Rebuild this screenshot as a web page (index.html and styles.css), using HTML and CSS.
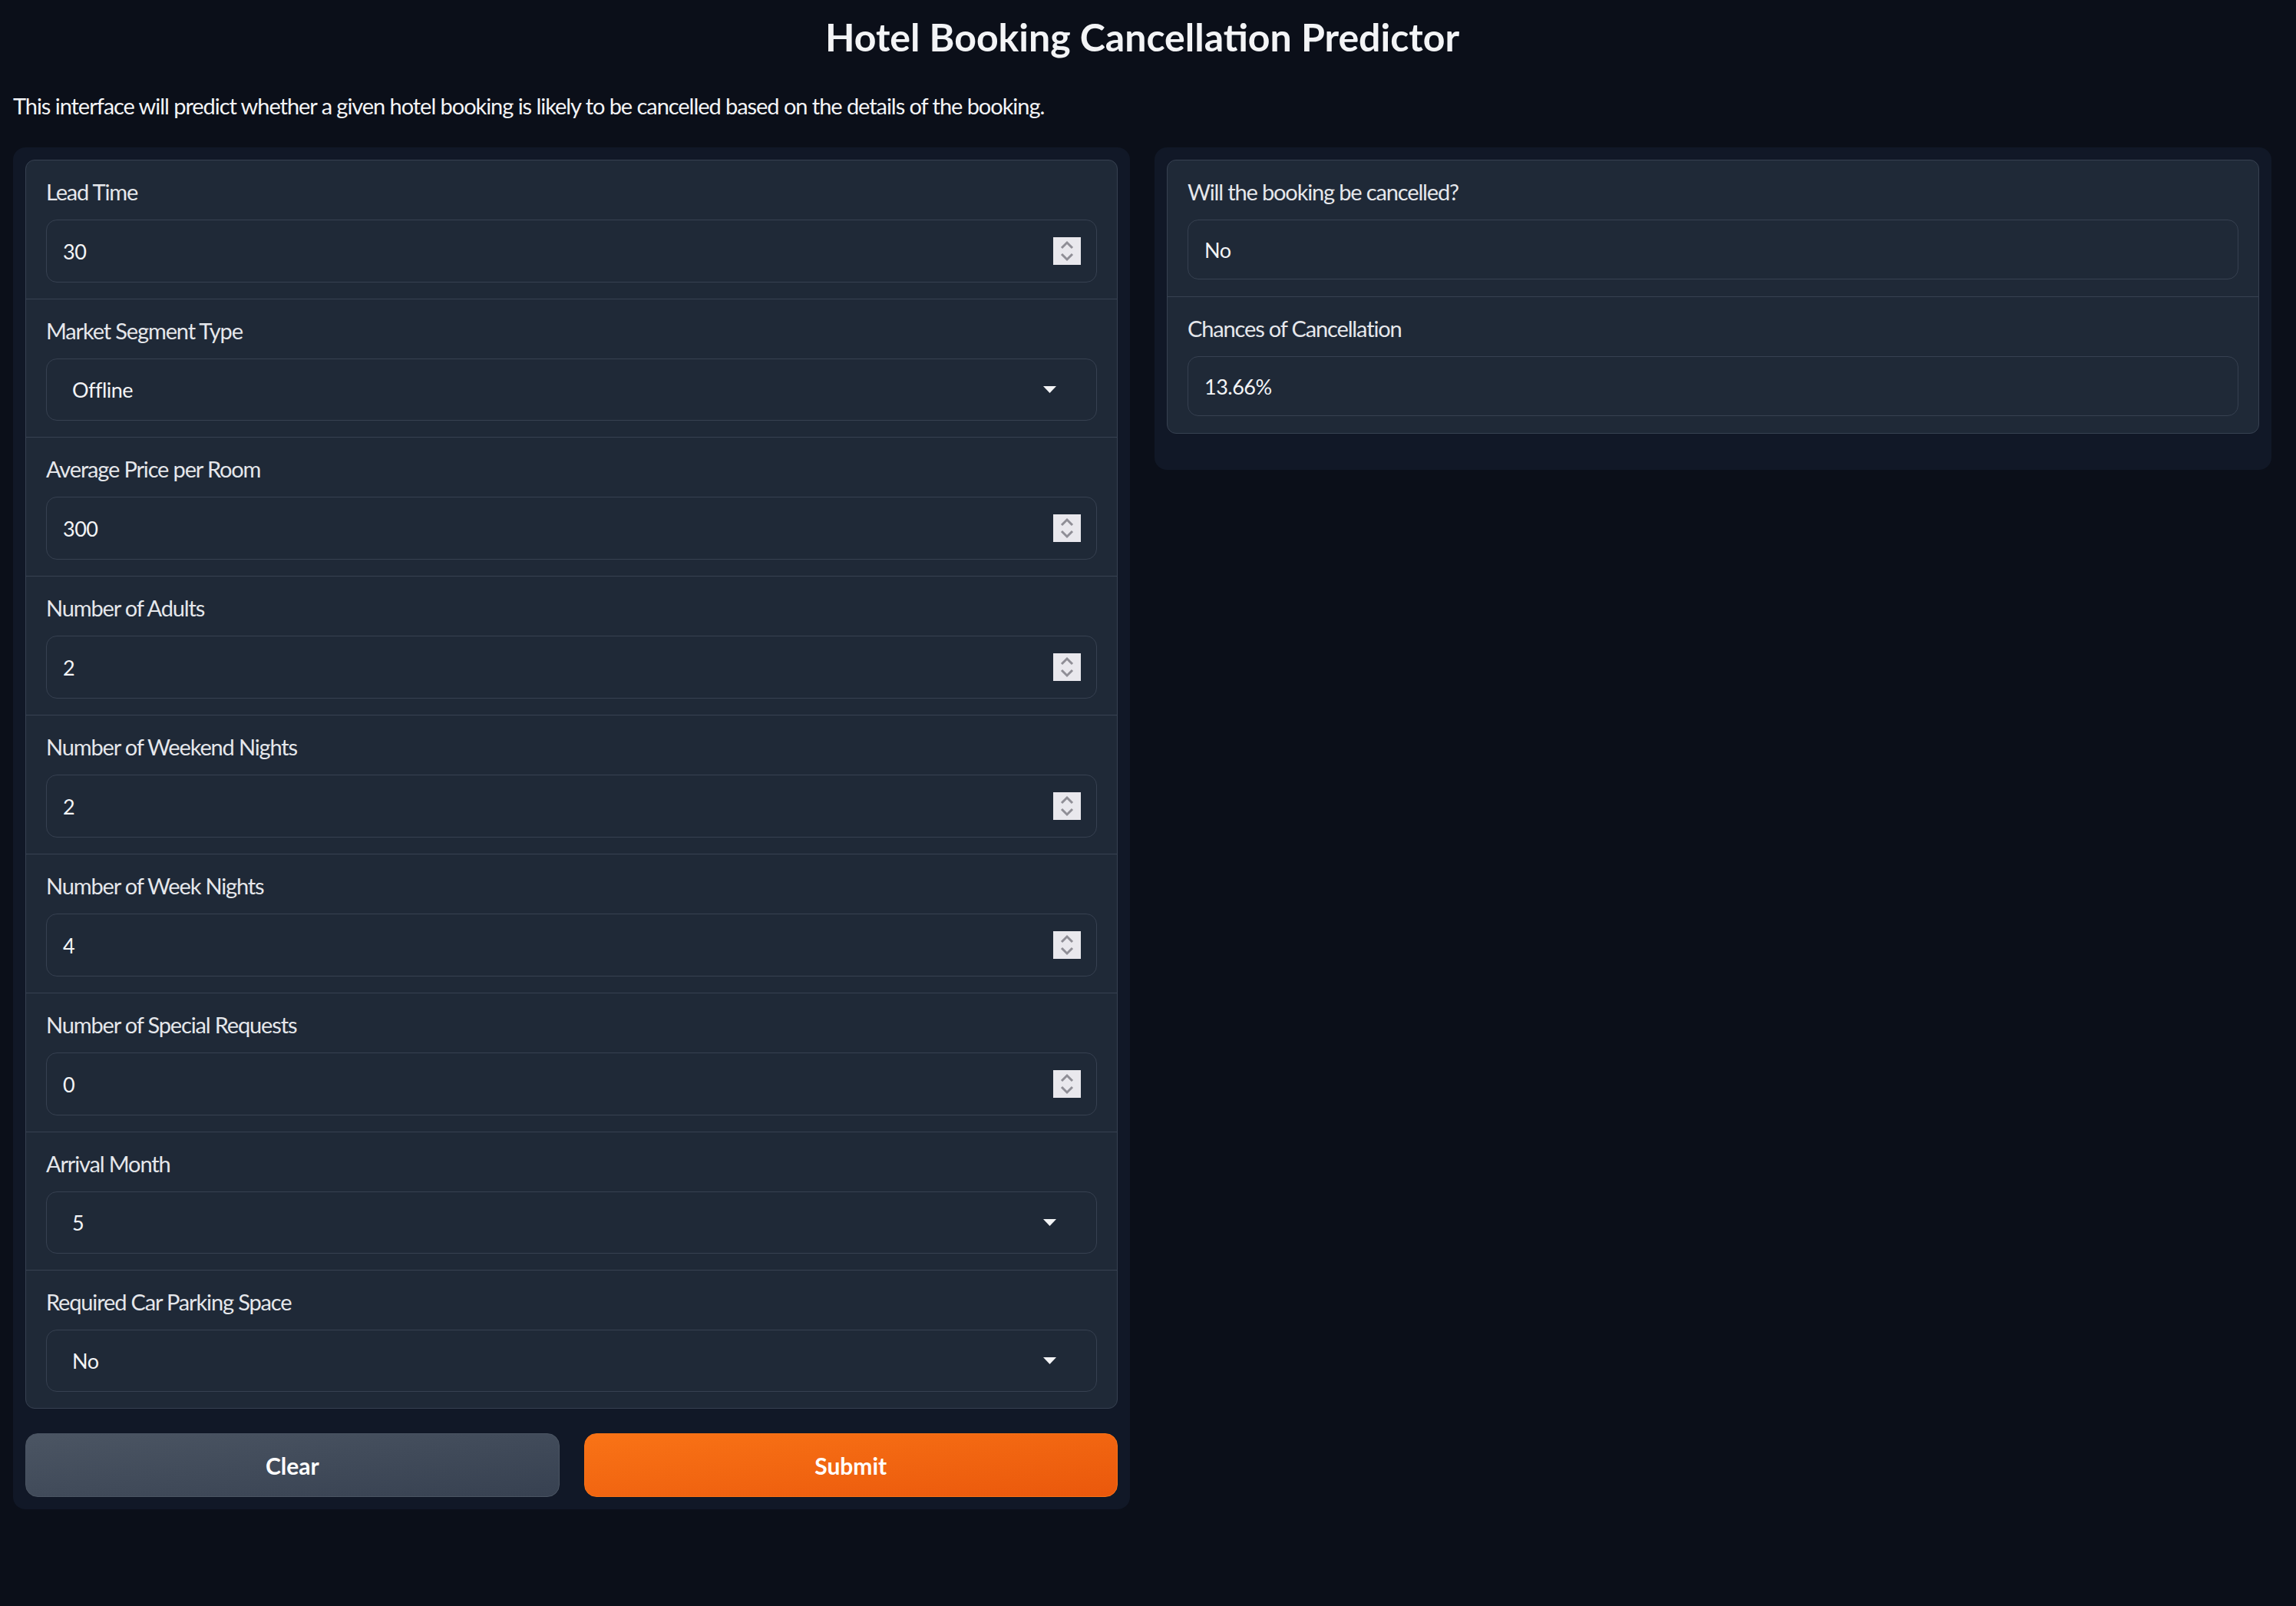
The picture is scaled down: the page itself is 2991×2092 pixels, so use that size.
FILE: index.html
```html
<!DOCTYPE html>
<html>
<head>
<meta charset="utf-8">
<link rel="stylesheet" href="styles.css">
</head>
<body>
<div class="app">
  <h1 class="title">Hotel Booking Cancellation Predictor</h1>
  <p class="desc">This interface will predict whether a given hotel booking is likely to be cancelled based on the details of the booking.</p>
  <div class="columns">
    <div class="panel">
      <div class="form">
        <div class="field">
          <span class="label">Lead Time</span>
          <div class="box number"><span class="val">30</span><span class="spin"><svg width="36" height="36" viewBox="0 0 36 36"><path d="M11 14 L18 7 L25 14 M11 22 L18 29 L25 22" fill="none" stroke="#8f8e96" stroke-width="3"/></svg></span></div>
        </div>
        <div class="field">
          <span class="label">Market Segment Type</span>
          <div class="box select"><span class="val">Offline</span><svg class="caret" width="17" height="9" viewBox="0 0 17 9"><path d="M0 0 L17 0 L8.5 9 Z" fill="#f3f4f6"/></svg></div>
        </div>
        <div class="field">
          <span class="label">Average Price per Room</span>
          <div class="box number"><span class="val">300</span><span class="spin"><svg width="36" height="36" viewBox="0 0 36 36"><path d="M11 14 L18 7 L25 14 M11 22 L18 29 L25 22" fill="none" stroke="#8f8e96" stroke-width="3"/></svg></span></div>
        </div>
        <div class="field">
          <span class="label">Number of Adults</span>
          <div class="box number"><span class="val">2</span><span class="spin"><svg width="36" height="36" viewBox="0 0 36 36"><path d="M11 14 L18 7 L25 14 M11 22 L18 29 L25 22" fill="none" stroke="#8f8e96" stroke-width="3"/></svg></span></div>
        </div>
        <div class="field">
          <span class="label">Number of Weekend Nights</span>
          <div class="box number"><span class="val">2</span><span class="spin"><svg width="36" height="36" viewBox="0 0 36 36"><path d="M11 14 L18 7 L25 14 M11 22 L18 29 L25 22" fill="none" stroke="#8f8e96" stroke-width="3"/></svg></span></div>
        </div>
        <div class="field">
          <span class="label">Number of Week Nights</span>
          <div class="box number"><span class="val">4</span><span class="spin"><svg width="36" height="36" viewBox="0 0 36 36"><path d="M11 14 L18 7 L25 14 M11 22 L18 29 L25 22" fill="none" stroke="#8f8e96" stroke-width="3"/></svg></span></div>
        </div>
        <div class="field">
          <span class="label">Number of Special Requests</span>
          <div class="box number"><span class="val">0</span><span class="spin"><svg width="36" height="36" viewBox="0 0 36 36"><path d="M11 14 L18 7 L25 14 M11 22 L18 29 L25 22" fill="none" stroke="#8f8e96" stroke-width="3"/></svg></span></div>
        </div>
        <div class="field">
          <span class="label">Arrival Month</span>
          <div class="box select"><span class="val">5</span><svg class="caret" width="17" height="9" viewBox="0 0 17 9"><path d="M0 0 L17 0 L8.5 9 Z" fill="#f3f4f6"/></svg></div>
        </div>
        <div class="field">
          <span class="label">Required Car Parking Space</span>
          <div class="box select"><span class="val">No</span><svg class="caret" width="17" height="9" viewBox="0 0 17 9"><path d="M0 0 L17 0 L8.5 9 Z" fill="#f3f4f6"/></svg></div>
        </div>
      </div>
      <div class="buttons">
        <button class="btn secondary">Clear</button>
        <button class="btn primary">Submit</button>
      </div>
    </div>
    <div class="panel output-panel">
      <div class="form">
        <div class="field out">
          <span class="label">Will the booking be cancelled?</span>
          <div class="box text"><span class="val">No</span></div>
        </div>
        <div class="field out">
          <span class="label">Chances of Cancellation</span>
          <div class="box text"><span class="val">13.66%</span></div>
        </div>
      </div>
    </div>
  </div>
</div>
</body>
</html>
```

FILE: styles.css
```css
html, body {
  margin: 0;
  padding: 0;
  background: #0b0f19;
}

body {
  font-family: "Lato", "Noto Sans", sans-serif;
  color: #e5e7eb;
}

.app {
  padding: 18px 32px 0 17px;
}

.title {
  margin: 0;
  text-align: center;
  font-size: 50px;
  line-height: 60px;
  font-weight: 700;
  color: #f3f4f6;
}

.desc {
  margin: 37px 0 32px 0;
  font-size: 29px;
  line-height: 45px;
  letter-spacing: -1.05px;
  color: #f3f4f6;
}

.columns {
  display: grid;
  grid-template-columns: 1fr 1fr;
  gap: 32px;
  align-items: start;
}

.panel {
  background: #111827;
  border-radius: 16px;
  padding: 16px;
}

.output-panel {
  padding-bottom: 47px;
}

.form {
  background: #1f2937;
  border: 1px solid #374151;
  border-radius: 12px;
  overflow: hidden;
}

.field {
  display: flex;
  flex-direction: column;
  padding: 18px 26px 21px 26px;
  border-top: 1px solid #374151;
}

.field:first-child {
  border-top: none;
}

.field.out {
  padding-bottom: 22px;
}

.label {
  font-size: 29px;
  line-height: 45px;
  letter-spacing: -1.15px;
  color: #e5e7eb;
  margin-bottom: 14px;
}

.box {
  display: flex;
  align-items: center;
  height: 82px;
  box-sizing: border-box;
  border: 1px solid #374151;
  border-radius: 14px;
  background: #1f2937;
  font-size: 27px;
  letter-spacing: -0.5px;
  color: #f3f4f6;
}

.box.number {
  padding: 0 20px 0 21px;
}

.box.select {
  padding: 0 52px 0 33px;
  height: 81px;
}

.box.text {
  height: 78px;
  padding: 0 21px;
}

.val {
  flex: 1;
}

.spin {
  width: 36px;
  height: 36px;
  background: #e9e8ed;
  display: flex;
}

.caret {
  display: block;
}

.buttons {
  display: grid;
  grid-template-columns: 1fr 1fr;
  gap: 32px;
  margin-top: 32px;
}

.btn {
  height: 83px;
  border-radius: 16px;
  font-family: "Lato", "Noto Sans", sans-serif;
  font-size: 30px;
  font-weight: 700;
  color: #ffffff;
  cursor: pointer;
}

.btn.secondary {
  background: linear-gradient(to bottom right, #4b5563, #374151);
  border: 1px solid #4b5563;
}

.btn.primary {
  background: linear-gradient(to bottom right, #f97316, #ea580c);
  border: 1px solid #f97316;
}
```
